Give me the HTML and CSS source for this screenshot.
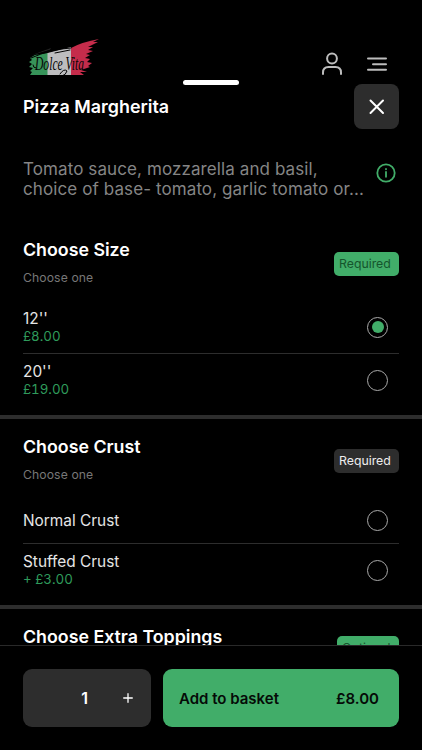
FILE: index.html
```
<!DOCTYPE html>
<html lang="en">
<head>
    <meta charset="UTF-8">
    <meta name="viewport" content="width=device-width, initial-scale=1.0">
    <title>Dolce Vita - Pizza Margherita</title>
    <link rel="stylesheet" href="styles.css">
</head>
<body>
    <div class="app">
        <header class="topbar">
            <svg class="logo" viewBox="0 0 72 40" width="72" height="40">
                <path fill="#37945a" d="M2 19 L7 16 L20 14 L20 36 L2 36 L4 33 L2 32 L5 29 L1 28 L4 25 L1 23 L4 21 Z"/>
                <path fill="#bdbdbf" d="M19.500 14 L43 8 L43 36 L19.500 36 Z"/>
                <path fill="#c52c4b" d="M43 9 Q54 3 71 0 L65 3 L70 3 L60 8 L65 8 L60 11 L65 12 L58 15 L62 16 L57 19 L62 20 L59 23 L64 24 L60 27 L62 28 L53 31 L59 33 L52 33 L56 36 L43 36 Z"/>
                <path fill="#222" d="M4 16 L23 9 L22 11 Z"/>
                <path class="brush" d="M3 19 Q23 10 43 9 M10 15 L26 10 M27 14 L42 11"/>
                <path class="brush" d="M32 35 Q36 29 39 32 Q38 36 34 37"/>
                <path class="brush" d="M8 29 Q5 29 5 26"/>
                <text class="logo-text" x="7" y="31" textLength="49" lengthAdjust="spacingAndGlyphs">Dolce Vita</text>
            </svg>
            <nav class="nav">
                <svg width="22" height="24" viewBox="0 0 22 24">
                    <circle cx="11" cy="6.500" r="4.900"/>
                    <path d="M2 22V20.500Q2 15 7.500 15H14.500Q20 15 20 20.500V22"/>
                </svg>
                <svg width="22" height="24" viewBox="0 0 22 24">
                    <path d="M2 6.500H20M7 12.200H20M2 17.800H20"/>
                </svg>
            </nav>
        </header>
        <div class="handle"></div>

        <main class="sheet">
            <div class="title-row">
                <h1>Pizza Margherita</h1>
                <button class="close-btn" aria-label="Close">
                    <svg width="17" height="17" viewBox="0 0 17 17"><path d="M2.500 2.500L15 15M15 2.500L2.500 15"/></svg>
                </button>
            </div>
            <div class="description">
                <p>Tomato sauce, mozzarella and basil,<br>choice of base- tomato, garlic tomato or...</p>
                <svg class="info" width="20" height="20" viewBox="0 0 20 20">
                    <circle cx="10" cy="10" r="8.700"/>
                    <path d="M10 9V13.800M10 6V6.300"/>
                </svg>
            </div>

            <section class="group">
                <div class="group-head">
                    <div>
                        <h2>Choose Size</h2>
                        <p class="hint">Choose one</p>
                    </div>
                    <span class="badge badge-green">Required</span>
                </div>
                <div class="option">
                    <div><div class="name">12''</div><div class="price">£8.00</div></div>
                    <span class="radio checked"></span>
                </div>
                <div class="option">
                    <div><div class="name">20''</div><div class="price">£19.00</div></div>
                    <span class="radio"></span>
                </div>
            </section>

            <section class="group">
                <div class="group-head">
                    <div>
                        <h2>Choose Crust</h2>
                        <p class="hint">Choose one</p>
                    </div>
                    <span class="badge">Required</span>
                </div>
                <div class="option option-short">
                    <div class="name">Normal Crust</div>
                    <span class="radio"></span>
                </div>
                <div class="option">
                    <div><div class="name">Stuffed Crust</div><div class="price">+ £3.00</div></div>
                    <span class="radio"></span>
                </div>
            </section>

            <section class="group">
                <div class="group-head extra">
                    <h2>Choose Extra Toppings</h2>
                    <span class="badge badge-green">Optional</span>
                </div>
            </section>
        </main>

        <footer class="footer">
            <div class="quantity">
                <span class="count">1</span>
                <button class="plus" aria-label="Add one">
                    <svg width="10" height="10" viewBox="0 0 10 10"><path d="M5 .7V9.300M.7 5H9.300"/></svg>
                </button>
            </div>
            <button class="basket-btn">
                <span>Add to basket</span>
                <span>£8.00</span>
            </button>
        </footer>
    </div>
</body>
</html>
```
FILE: styles.css
```
* { box-sizing: border-box; }
body { margin: 0; background: #000; color: #fff; font-family: Inter, sans-serif; }
h1, h2, p { margin: 0; white-space: nowrap; }
button { border: none; padding: 0; font-family: inherit; cursor: pointer; }
svg { display: block; fill: none; stroke-linecap: round; stroke-linejoin: round; }

.app { width: 422px; height: 750px; display: flex; flex-direction: column; overflow: hidden; }

.topbar { height: 80px; flex: none; display: flex; justify-content: space-between; padding: 39px 34px 0 28px; }
.logo { overflow: visible; }
.logo-text { font: italic 400 18px "Liberation Serif", cursive; fill: #050505; }
.brush { stroke: #000; stroke-width: 1; }
.nav { display: flex; gap: 23px; padding-top: 13px; stroke: #bdbdbd; stroke-width: 2; }
.handle { width: 56px; height: 5px; flex: none; margin: 0 auto -1px; border-radius: 3px; background: #fff; }

.sheet { flex: 1; min-height: 0; overflow: hidden; }
.title-row { display: flex; justify-content: space-between; align-items: center; padding: 0 23px; }
h1 { font-size: 17.9px; font-weight: 600; line-height: 24px; }
.close-btn { width: 45px; height: 45px; display: flex; align-items: center; justify-content: center; border-radius: 8px; background: #2d2d2d; }
.close-btn svg { stroke: #fff; stroke-width: 2; }
.description { display: flex; justify-content: space-between; padding: 30px 26px 23px 23px; font-size: 17px; line-height: 20px; letter-spacing: .1px; color: #858585; }
.info { margin-top: 4px; stroke: #41ad69; stroke-width: 1.8; }

.group { border-bottom: 4px solid #2d2d2d; }
.group-head { display: flex; justify-content: space-between; padding: 16px 23px 0; height: 79px; }
h2 { font-size: 17.8px; font-weight: 600; line-height: 24px; }
.hint { margin-top: 7px; font-size: 12.2px; line-height: 17px; letter-spacing: .1px; color: #777; }
.badge { width: 65px; height: 24px; margin-top: 14px; padding-left: 5px; border-radius: 5px; background: #2d2d2d; color: #eee; font-size: 12.3px; line-height: 24px; }
.badge-green { background: #41ad69; color: #15552d; }

.option { height: 53px; display: flex; justify-content: space-between; align-items: center; margin: 0 23px; padding-right: 11px; border-bottom: 1px solid #2d2d2d; }
.option:last-child { border-bottom: none; height: 61px; padding-bottom: 9px; }
.option-short { height: 46px; }
.name { font-size: 15.4px; line-height: 18px; color: #e5e5e5; }
.option div > .name { padding-top: 2px; line-height: 16px; }
.price { font-size: 13.3px; line-height: 18px; font-variant-numeric: tabular-nums; color: #2f9b5b; }
.radio { width: 21px; height: 21px; border: 1px solid #aaa; border-radius: 50%; }
.checked { display: flex; align-items: center; justify-content: center; }
.checked::after { content: ""; width: 12px; height: 12px; border-radius: 50%; background: #41ad69; }

.extra .badge { width: 62px; margin-top: 11px; }

.footer { flex: none; height: 105px; display: flex; gap: 12px; padding: 23px 23px 0; border-top: 1px solid #292929; background: #000; }
.quantity { width: 128px; height: 58px; display: flex; align-items: center; justify-content: flex-end; gap: 35px; padding-right: 18px; border-radius: 9px; background: #2d2d2d; }
.count { font-size: 16px; font-weight: 600; }
.plus { background: none; }
.plus svg { stroke: #fff; stroke-width: 1.3; }
.basket-btn { flex: 1; height: 58px; display: flex; align-items: center; justify-content: space-between; padding: 0 20px 0 16px; border-radius: 9px; background: #41ad69; color: #050a07; font-size: 15px; font-weight: 600; }
```
